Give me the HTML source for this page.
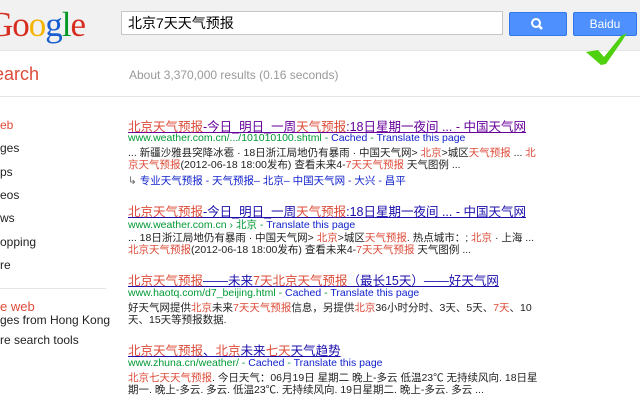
<!DOCTYPE html>
<html><head><meta charset="utf-8"><style>
body{margin:0;width:640px;height:400px;overflow:hidden;background:#fff;font-family:"Liberation Sans","Noto Sans CJK SC",Arial,sans-serif;position:relative}
.a{position:absolute;white-space:nowrap}
.hd{position:absolute;left:0;top:0;width:640px;height:50px;background:#f1f1f1;border-bottom:1px solid #e5e5e5}
.t{font-size:12.5px;text-decoration:underline;color:#1a0dab}
.t .r,.r{color:#dd4b39}
.u{font-size:10.5px;color:#093}
.u b{font-weight:normal;color:#1122cc}
.s{font-size:10.5px;color:#222}
.nv{font-size:12px;color:#222;position:absolute;left:0}
</style></head><body>
<div class="hd"></div>
<div class="a" style="left:-12px;top:5px;font-family:'Liberation Serif',serif;font-size:35px;letter-spacing:-1px"><span style="color:#d62d20">G</span><span style="color:#d62d20">o</span><span style="color:#f4b400">o</span><span style="color:#1a5fd0">g</span><span style="color:#009925">l</span><span style="color:#d62d20">e</span></div>
<div class="a" style="left:121px;top:11px;width:374px;height:22px;background:#fff;border:1px solid #c6c6c6;font-size:14px;line-height:22px;padding-left:6px;box-sizing:content-box">北京7天天气预报</div>
<div class="a" style="left:509px;top:12px;width:56px;height:22px;background:#4d90fe;border:1px solid #3079ed;border-radius:2px">
<svg width="56" height="22" viewBox="0 0 56 22"><circle cx="26" cy="10" r="4" fill="none" stroke="#fff" stroke-width="2"/><line x1="29" y1="13" x2="32" y2="16" stroke="#fff" stroke-width="2.5"/></svg></div>
<div class="a" style="left:573px;top:12px;width:62px;height:22px;background:#4d90fe;border:1px solid #3079ed;border-radius:2px;color:#fff;font-size:12px;line-height:22px;text-align:center">Baidu</div>
<svg class="a" style="left:585px;top:33px" width="44" height="34" viewBox="0 0 44 34"><path d="M1 19 L13 17 L19 24 L36 3 L42 0 L37 8 L21 31 L16 32 Z" fill="#4fd10f"/></svg>
<div class="a" style="left:-6px;top:64px;font-size:18px;color:#dd4b39">earch</div>
<div class="a" style="left:129px;top:68px;font-size:12px;color:#999">About 3,370,000 results (0.16 seconds)</div>
<div class="a" style="left:0;top:96px;width:640px;height:1px;background:#e5e5e5"></div>

<div class="nv" style="top:118px;color:#dd4b39">eb</div>
<div class="nv" style="top:141px">ges</div>
<div class="nv" style="top:165px">ps</div>
<div class="nv" style="top:188px">eos</div>
<div class="nv" style="top:211px">ws</div>
<div class="nv" style="top:235px">opping</div>
<div class="nv" style="top:258px">re</div>
<div class="a" style="left:0;top:288px;width:106px;height:1px;background:#e5e5e5"></div>
<div class="nv" style="top:299px;color:#dd4b39;font-size:13px">e web</div>
<div class="nv" style="top:313px">ges from Hong Kong</div>
<div class="nv" style="top:333px">re search tools</div>

<div class="a t" style="left:128px;top:116px;color:#609"><span class="r">北京天气预报</span>-今日_明日_一周<span class="r">天气预报</span>:18日星期一夜间 ... - 中国天气网</div>
<div class="a u" style="left:128px;top:132px">www.weather.com.cn/.../101010100.shtml - <b>Cached</b> - <b>Translate this page</b></div>
<div class="a s" style="left:128px;top:145px">... 新疆沙雅县突降冰雹 · 18日浙江局地仍有暴雨 · 中国天气网&gt; <span class="r">北京</span>&gt;城区<span class="r">天气预报</span> ... <span class="r">北</span></div>
<div class="a s" style="left:128px;top:157px"><span class="r">京天气预报</span>(2012-06-18 18:00发布) 查看未来4-<span class="r">7天天气预报</span> 天气图例 ...</div>
<div class="a s" style="left:128px;top:173px;color:#1122cc"><span style="color:#666">↳</span> 专业天气预报 - 天气预报– 北京– 中国天气网 - 大兴 - 昌平</div>

<div class="a t" style="left:128px;top:201px"><span class="r">北京天气预报</span>-今日_明日_一周<span class="r">天气预报</span>:18日星期一夜间 ... - 中国天气网</div>
<div class="a u" style="left:128px;top:217px">www.weather.com.cn › 北京 - <b>Translate this page</b></div>
<div class="a s" style="left:128px;top:230px">... 18日浙江局地仍有暴雨 · 中国天气网&gt; <span class="r">北京</span>&gt;城区<span class="r">天气预报</span>. 热点城市：; <span class="r">北京</span> · 上海 ...</div>
<div class="a s" style="left:128px;top:242px"><span class="r">北京天气预报</span>(2012-06-18 18:00发布) 查看未来4-<span class="r">7天天气预报</span> 天气图例 ...</div>

<div class="a t" style="left:128px;top:270px"><span class="r">北京天气预报</span>——未来<span class="r">7天北京天气预报</span>（最长15天）——好天气网</div>
<div class="a u" style="left:128px;top:287px">www.haotq.com/d7_beijing.html - <b>Cached</b> - <b>Translate this page</b></div>
<div class="a s" style="left:128px;top:300px">好天气网提供<span class="r">北京</span>未来<span class="r">7天天气预报</span>信息，另提供<span class="r">北京</span>36小时分时、3天、5天、<span class="r">7天</span>、10</div>
<div class="a s" style="left:128px;top:312px">天、15天等预报数据.</div>

<div class="a t" style="left:128px;top:340px"><span class="r">北京天气预报</span>、<span class="r">北京</span>未来<span class="r">七天</span>天气趋势</div>
<div class="a u" style="left:128px;top:357px">www.zhuna.cn/weather/ - <b>Cached</b> - <b>Translate this page</b></div>
<div class="a s" style="left:128px;top:370px"><span class="r">北京七天天气预报</span>. 今日天气：06月19日 星期二 晚上-多云 低温23℃ 无持续风向. 18日星</div>
<div class="a s" style="left:128px;top:382px">期一. 晚上-多云. 多云. 低温23℃. 无持续风向. 19日星期二. 晚上-多云. 多云 ...</div>
</body></html>
